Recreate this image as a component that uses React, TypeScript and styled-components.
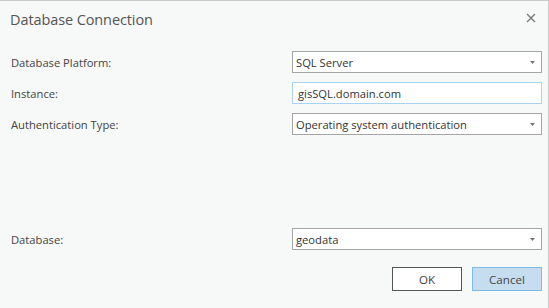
import * as React from "react";
import styled, { createGlobalStyle } from "styled-components";

const GlobalStyle = createGlobalStyle`
	html, body {
		margin: 0;
		padding: 0;
		background: #f7f8f8;
	}
	body {
		font-family: "Open Sans", "Noto Sans", "Liberation Sans", sans-serif;
		color: #444;
	}
`;

const Dialog = styled.div`
	width: 549px;
	height: 308px;
	box-sizing: border-box;
	background: #f7f8f8;
	border-top: 1px solid #c9caca;
	border-right: 1px solid #c9caca;
	display: flex;
	flex-direction: column;
`;

const Header = styled.div`
	height: 37px;
	display: flex;
	align-items: center;
	justify-content: space-between;
	padding: 0 11px 0 10px;
`;

const Title = styled.div`
	font-size: 14.5px;
	color: #555;
	letter-spacing: -0.1px;
	margin-top: -1px;
`;

const CloseButton = styled.button`
	border: none;
	background: none;
	padding: 0;
	width: 12px;
	height: 12px;
	display: flex;
	align-items: center;
	justify-content: center;
	margin-top: -4px;
	cursor: pointer;
`;

const Form = styled.div`
	display: grid;
	grid-template-columns: 281px 250px;
	row-gap: 9px;
	padding: 13px 0 0 11px;
	align-items: center;
`;

const Spacer = styled.div`
	flex: 1;
`;

const Label = styled.label`
	font-size: 11.2px;
	color: #444;
`;

const FieldBox = styled.div<{ $focused?: boolean; $arrow?: boolean }>`
	height: 22px;
	box-sizing: border-box;
	background: #fff;
	border: 1px solid ${(p) => (p.$focused ? "#a9d3f0" : "#a5a5a5")};
	display: flex;
	align-items: center;
	justify-content: space-between;
	padding: 0 6px 0 ${(p) => (p.$arrow ? "3px" : "5px")};
	font-size: 11.2px;
	color: #333;
`;

const Arrow = styled.svg`
	flex: none;
	margin-top: 1px;
`;

const Footer = styled.div`
	display: flex;
	justify-content: flex-end;
	gap: 10px;
	padding: 17px 6px 17px 0;
`;

const Button = styled.button<{ $primary?: boolean }>`
	width: 70px;
	height: 24px;
	box-sizing: border-box;
	font-family: inherit;
	font-size: 11.6px;
	color: #444;
	background: ${(p) => (p.$primary ? "#c6dcef" : "#fff")};
	border: 1px solid ${(p) => (p.$primary ? "#7fbbe8" : "#555")};
	padding: 0;
	cursor: pointer;
`;

function DropArrow() {
	return (
		<Arrow width="5" height="3" viewBox="0 0 5 3">
			<polygon points="0,0 5,0 2.5,3" fill="#777" />
		</Arrow>
	);
}

function Select({ value }: { value: string }) {
	return (
		<FieldBox $arrow>
			<span>{value}</span>
			<DropArrow />
		</FieldBox>
	);
}

export default function App() {
	return (
		<>
			<GlobalStyle />
			<Dialog>
				<Header>
					<Title>Database Connection</Title>
					<CloseButton aria-label="Close">
						<svg width="10" height="10" viewBox="0 0 10 10">
							<path d="M1 1L9 9M9 1L1 9" stroke="#777" strokeWidth="1.3" />
						</svg>
					</CloseButton>
				</Header>
				<Form>
					<Label>Database Platform:</Label>
					<Select value="SQL Server" />
					<Label>Instance:</Label>
					<FieldBox $focused>gisSQL.domain.com</FieldBox>
					<Label>Authentication Type:</Label>
					<Select value="Operating system authentication" />
				</Form>
				<Spacer />
				<Form>
					<Label>Database:</Label>
					<Select value="geodata" />
				</Form>
				<Footer>
					<Button>OK</Button>
					<Button $primary>Cancel</Button>
				</Footer>
			</Dialog>
		</>
	);
}
